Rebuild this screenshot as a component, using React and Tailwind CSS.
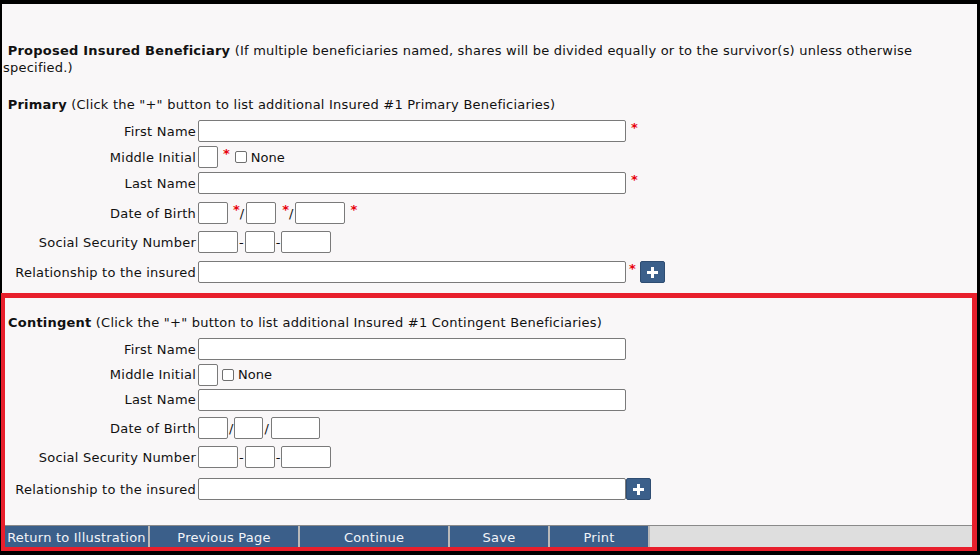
import { Fragment } from "react";

const font = { fontFamily: '"DejaVu Sans", Verdana, sans-serif' };

const Req = ({ className = "ml-[5px]" }) => (
  <span className={`self-start mt-[1px] text-[13px] font-bold leading-none text-[#e8000b] ${className}`}>*</span>
);

const Box = ({ w }) => (
  <span className={`block h-[22px] bg-white border border-[#7a7a7a] rounded-[2px] shrink-0 ${w}`} />
);

const Check = ({ className }) => (
  <span className={`flex items-center ${className}`}>
    <span className="block w-[12px] h-[12px] bg-white border border-[#6f6f6f] rounded-[2px]" />
    <span className="ml-[4px]">None</span>
  </span>
);

const Plus = ({ className }) => (
  <span
    className={`flex items-center justify-center w-[25px] h-[22px] bg-[#3b5f8a] border border-[#2f4d72] rounded-[2px] ${className}`}
  >
    <svg width="11" height="11" viewBox="0 0 11 11">
      <rect x="4" y="0" width="3" height="11" fill="#fff" />
      <rect x="0" y="4" width="11" height="3" fill="#fff" />
    </svg>
  </span>
);

const Row = ({ label, h, labelW, children }) => (
  <div className={`flex items-center ${h}`}>
    <div className={`${labelW} shrink-0 text-right whitespace-nowrap`}>{label}</div>
    <div className="ml-[2px] flex items-center h-[22px] tracking-normal">{children}</div>
  </div>
);

const Sep = ({ ch, className = "" }) => (
  <span className={`leading-none ${className}`}>{ch}</span>
);

export default function App() {
  const buttons = [
    { t: "Return to Illustration", w: "w-[145px]" },
    { t: "Previous Page", w: "w-[150px]" },
    { t: "Continue", w: "w-[150px]" },
    { t: "Save", w: "w-[100px]" },
    { t: "Print", w: "w-[100px]" },
  ];

  return (
    <div className="w-[980px] h-[555px] bg-black pt-[4px] pl-[2px] pr-[3px] pb-[4px]" style={font}>
      <div className="h-full bg-[#f9f7f8] text-[13px] text-[#111] leading-[17px] tracking-[0.22px] flex flex-col">
        {/* primary */}
        <div className="h-[289px] shrink-0 pl-[1px]">
          <div className="mt-[38px] whitespace-nowrap">
            <b>&nbsp;Proposed Insured Beneficiary</b> (If multiple beneficiaries named, shares will be divided
            equally or to the survivor(s) unless otherwise
            <br />
            specified.)
          </div>
          <div className="mt-[20px] whitespace-nowrap">
            <b>&nbsp;Primary</b> (Click the "+" button to list additional Insured #1 Primary Beneficiaries)
          </div>
          <div className="mt-[5px]">
            <Row label="First Name" h="h-[26px]" labelW="w-[193px]">
              <Box w="w-[428px]" />
              <Req />
            </Row>
            <Row label="Middle Initial" h="h-[26px]" labelW="w-[193px]">
              <Box w="w-[20px]" />
              <Req />
              <Check className="ml-[5px]" />
            </Row>
            <Row label="Last Name" h="h-[26px]" labelW="w-[193px]">
              <Box w="w-[428px]" />
              <Req />
            </Row>
            <Row label="Date of Birth" h="h-[34px]" labelW="w-[193px]">
              <Box w="w-[30px]" />
              <Req />
              <Sep ch="/" className="mr-[2px]" />
              <Box w="w-[30px]" />
              <Req className="ml-[6px]" />
              <Sep ch="/" className="mr-[2px]" />
              <Box w="w-[50px]" />
              <Req />
            </Row>
            <Row label="Social Security Number" h="h-[24px]" labelW="w-[193px]">
              <Box w="w-[40px]" />
              <Sep ch="-" className="mx-[1px]" />
              <Box w="w-[30px]" />
              <Sep ch="-" className="mx-[1px]" />
              <Box w="w-[50px]" />
            </Row>
            <Row label="Relationship to the insured" h="h-[36px]" labelW="w-[193px]">
              <Box w="w-[428px]" />
              <Req className="ml-[3px]" />
              <Plus className="ml-[4px]" />
            </Row>
          </div>
        </div>

        {/* contingent, outlined */}
        <div className="ml-[-1px] flex-1 flex flex-col border-[#e81f2c] border-t-[5px] border-l-[4px] border-r-[5px] border-b-[4px]">
          <div className="mt-[16px] pl-[3px] whitespace-nowrap">
            <b>Contingent</b> (Click the "+" button to list additional Insured #1 Contingent Beneficiaries)
          </div>
          <div className="mt-[5px]">
            <Row label="First Name" h="h-[26px]" labelW="w-[191px]">
              <Box w="w-[428px]" />
            </Row>
            <Row label="Middle Initial" h="h-[25px]" labelW="w-[191px]">
              <Box w="w-[20px]" />
              <Check className="ml-[4px]" />
            </Row>
            <Row label="Last Name" h="h-[25px]" labelW="w-[191px]">
              <Box w="w-[428px]" />
            </Row>
            <Row label="Date of Birth" h="h-[32px]" labelW="w-[191px]">
              <Box w="w-[30px]" />
              <Sep ch="/" className="mx-[1px]" />
              <Box w="w-[29px]" />
              <Sep ch="/" className="mx-[1px] mr-[2px]" />
              <Box w="w-[49px]" />
            </Row>
            <Row label="Social Security Number" h="h-[26px]" labelW="w-[191px]">
              <Box w="w-[40px]" />
              <Sep ch="-" className="mx-[1px]" />
              <Box w="w-[30px]" />
              <Sep ch="-" className="mx-[1px]" />
              <Box w="w-[50px]" />
            </Row>
            <Row label="Relationship to the insured" h="h-[38px]" labelW="w-[191px]">
              <Box w="w-[428px]" />
              <Plus />
            </Row>
          </div>
          <div className="flex-1" />
          <div className="h-[22px] flex border-t border-[#8a8a8a] bg-[#dedede]">
            {buttons.map((b) => (
              <Fragment key={b.t}>
                <div
                  className={`${b.w} shrink-0 h-full bg-[#3b5f8a] text-[#f2f4f8] flex items-center justify-center pt-[2px] whitespace-nowrap border-r-2 border-[#b9b9b9]`}
                >
                  {b.t}
                </div>
              </Fragment>
            ))}
          </div>
        </div>
      </div>
    </div>
  );
}
